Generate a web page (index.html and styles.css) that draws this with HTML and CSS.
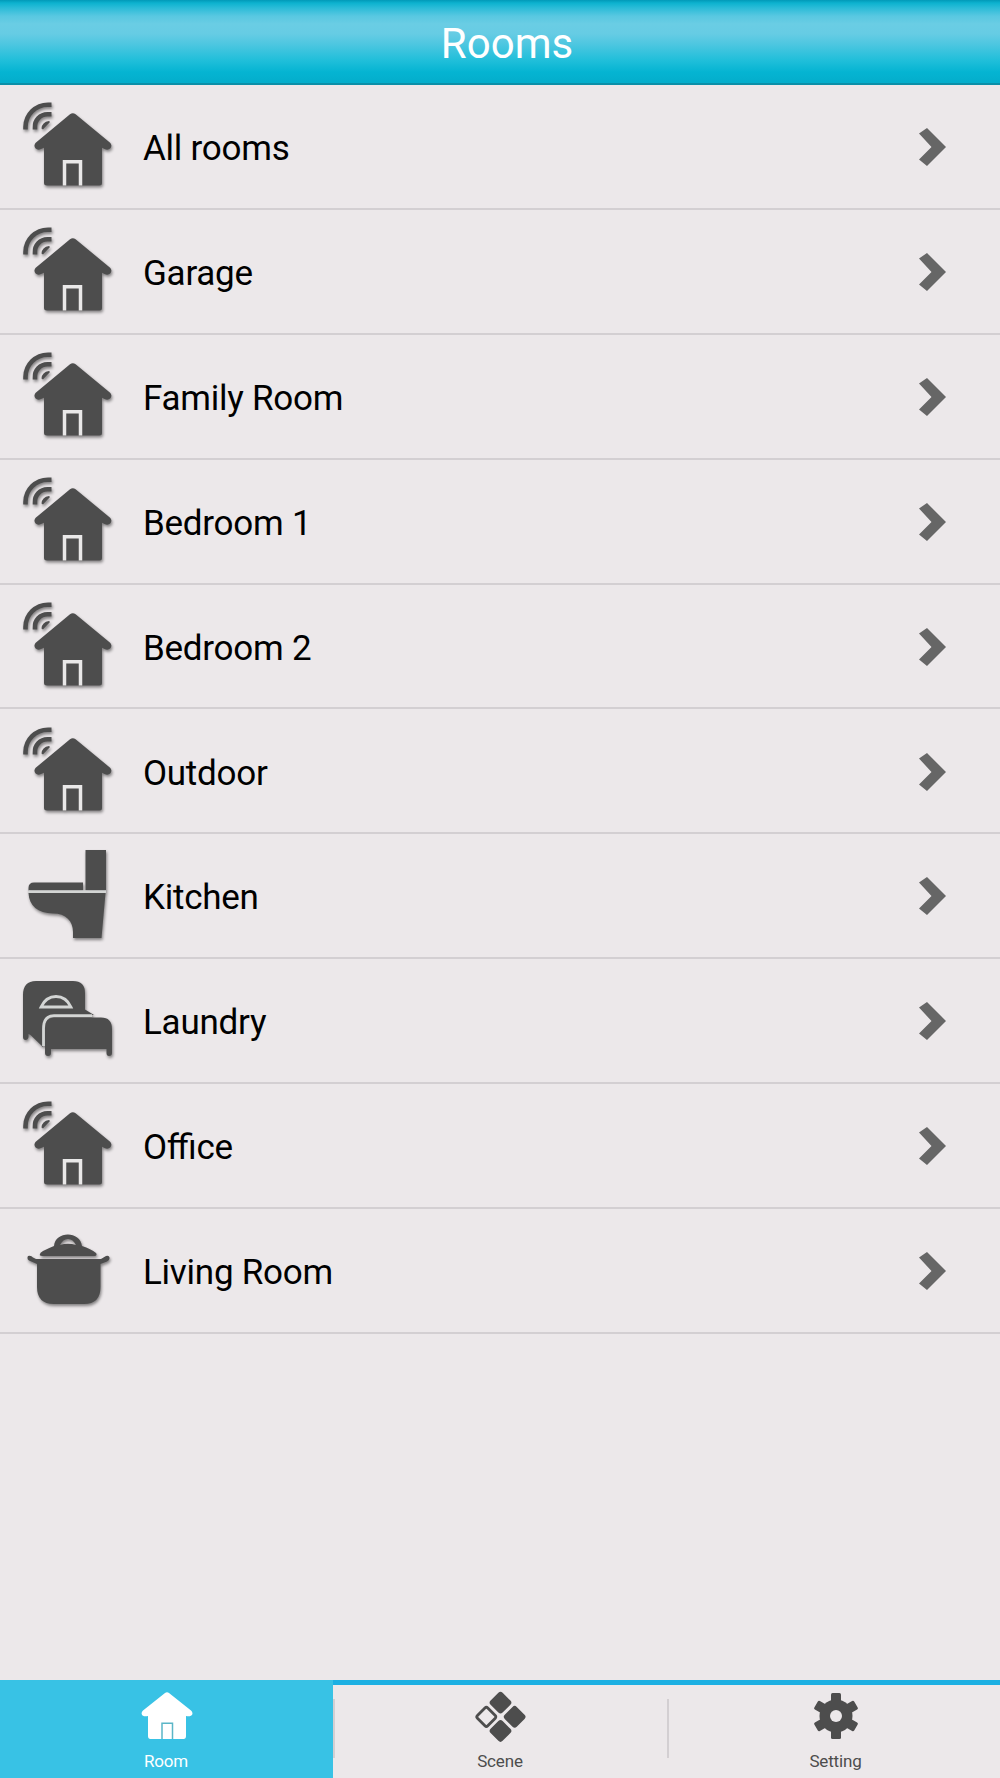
FILE: index.html
```
<!DOCTYPE html>
<html lang="en">
<head>
<meta charset="utf-8">
<title>Rooms</title>
<link rel="stylesheet" href="styles.css">
</head>
<body>
<svg class="sprite" aria-hidden="true">
  <symbol id="home" viewBox="16 0 104 124">
    <path d="M25.500 44.500V42A22.500 22.500 0 0 1 48 19.700H51.500M35 44.500V42.500A12.500 12.500 0 0 1 47.500 29.200H51.500" fill="none" stroke="currentColor" stroke-width="4.600"/>
    <path d="M41.500 43.500Q42 37 49 36L50 37L43 44.500Z"/>
    <path d="M70 29.300Q72.800 27 75.600 29.300L109.800 57.500C113.800 61.500 109.500 66.500 104.500 64L102 62.800V98Q102 100.500 99.500 100.500H47Q44 100.500 44 98V62.800L41 64C36.500 66.500 32 61.500 36 57.500Z"/>
    <path class="cut" d="M64.500 100.500V76.800H80.500V100.500"/>
  </symbol>
  <symbol id="toilet" viewBox="16 0 104 124">
    <path d="M85.500 16H106V56.500H85.500Z"/>
    <path d="M28.500 56.500V54Q28.500 48.500 34 48.500H83V56.500Z"/>
    <path class="line" d="M28.500 57.700H106"/>
    <path d="M28.500 59H105.500L101.500 104H73V98C73 87 66 79.500 53 79.500C38 79 29 72 28.500 59Z"/>
  </symbol>
  <symbol id="bed" viewBox="16 0 104 124">
    <path d="M23 36Q23 22 36 22H73Q85 22 85 34V50.500L94 56H54Q44 57 43 66V88L30.500 76L28.500 75V78Q28 81 25.500 81Q23 81 23 78Z"/>
    <path class="line" d="M41 48Q46 37.500 56 37.500Q66 37.500 71 48Z"/>
    <path class="line" d="M43.500 87V70Q43.500 56.700 54 56.700H92"/>
    <path d="M45 69Q45 58.500 54 58.500H101Q112 58.500 112 70V94Q112 97 109 97Q106.500 97 106.500 94V90H51V94Q51 97 48 97Q45 97 45 94Z"/>
  </symbol>
  <symbol id="pot" viewBox="16 0 104 124">
    <path fill-rule="evenodd" d="M40 46.500Q39 44 43 42Q49 39 54 37C55 21.500 80.500 21.500 82 37Q91 40 96 44Q97.500 46.500 95 47H42ZM60 36Q68 33.500 76 36Q73 30 68 30Q63 30 60 36Z"/>
    <path d="M28 47Q31 46 33 48.500L36 50H101L106 47Q109 46 109.500 48.500Q110 51 107 52.500L100.500 55V78Q100.500 95 84 95H54Q37 95 37 78V55L29 51.500Q26.500 50 28 47Z"/>
  </symbol>
  <symbol id="chevron" viewBox="0 0 28 40">
    <path d="M0 6.500L8 1L27 20L8 39L0 32.500L12.500 20Z"/>
  </symbol>
</svg>

<div class="app">
  <header class="header"><h1 class="title">Rooms</h1></header>

  <main class="list">
    <div class="row"><svg class="row-icon"><use href="#home"/></svg><span class="name">All rooms</span><svg class="chevron"><use href="#chevron"/></svg></div>
    <div class="row"><svg class="row-icon"><use href="#home"/></svg><span class="name">Garage</span><svg class="chevron"><use href="#chevron"/></svg></div>
    <div class="row"><svg class="row-icon"><use href="#home"/></svg><span class="name">Family Room</span><svg class="chevron"><use href="#chevron"/></svg></div>
    <div class="row"><svg class="row-icon"><use href="#home"/></svg><span class="name">Bedroom 1</span><svg class="chevron"><use href="#chevron"/></svg></div>
    <div class="row"><svg class="row-icon"><use href="#home"/></svg><span class="name">Bedroom 2</span><svg class="chevron"><use href="#chevron"/></svg></div>
    <div class="row"><svg class="row-icon"><use href="#home"/></svg><span class="name">Outdoor</span><svg class="chevron"><use href="#chevron"/></svg></div>
    <div class="row"><svg class="row-icon"><use href="#toilet"/></svg><span class="name">Kitchen</span><svg class="chevron"><use href="#chevron"/></svg></div>
    <div class="row"><svg class="row-icon"><use href="#bed"/></svg><span class="name">Laundry</span><svg class="chevron"><use href="#chevron"/></svg></div>
    <div class="row"><svg class="row-icon"><use href="#home"/></svg><span class="name">Office</span><svg class="chevron"><use href="#chevron"/></svg></div>
    <div class="row"><svg class="row-icon"><use href="#pot"/></svg><span class="name">Living Room</span><svg class="chevron"><use href="#chevron"/></svg></div>
  </main>

  <nav class="tabs">
    <div class="tab active">
      <svg class="tab-icon" viewBox="0 0 56 56">
        <path d="M26 5Q28 3.300 30 5L52 22.500C55.500 26 52.500 29.500 47 28V48Q47 51 44.500 51H11.500Q9 51 9 48V28C3 29.500 1 25.500 4 22.500Z"/>
        <path class="door" d="M23 51V35.300H33.500V51"/>
      </svg>
      <span class="tab-label">Room</span>
    </div>
    <div class="tab">
      <svg class="tab-icon" viewBox="0 0 56 56">
        <g transform="translate(28.500 28.800) rotate(45)">
          <rect x="-18.500" y="-18.500" width="17" height="17" rx="3"/>
          <rect x="1.500" y="-18.500" width="17" height="17" rx="3"/>
          <rect x="1.500" y="1.500" width="17" height="17" rx="3"/>
          <rect class="hollow" x="-17.300" y="2.700" width="14.600" height="14.600" rx="2"/>
        </g>
      </svg>
      <span class="tab-label">Scene</span>
    </div>
    <div class="tab">
      <svg class="tab-icon" viewBox="0 0 56 56">
        <defs><rect id="tooth" x="-5" y="-23" width="10" height="46" rx="1.500"/></defs>
        <g transform="translate(28 28)">
          <use href="#tooth"/>
          <use href="#tooth" transform="rotate(60)"/>
          <use href="#tooth" transform="rotate(120)"/>
          <circle r="16.500"/>
          <circle class="hub" r="6"/>
        </g>
      </svg>
      <span class="tab-label">Setting</span>
    </div>
  </nav>
</div>
</body>
</html>
```
FILE: styles.css
```
* {
  box-sizing: border-box;
}

body {
  margin: 0;
  background: #ece8ea;
  font-family: Roboto, "Liberation Sans", sans-serif;
}

.sprite {
  display: none;
}

.app {
  display: flex;
  flex-direction: column;
  height: 1778px;
}

.header {
  flex: none;
  height: 85px;
  padding: 0 0 0 14px;
  text-align: center;
  border-bottom: 2px solid #0b8fa8;
  background: linear-gradient(#0299b8 0, #0cb2cf 3px, #2bbcd8 8px, #58c8e1 16px, #6acde4 24px, #66cce4 34px, #4bc6e0 45px, #21bfda 60px, #05b4d2 72px, #04adcb 83px);
}

.title {
  margin: 0;
  color: #fff;
  font-size: 42px;
  font-weight: 400;
  line-height: 88px;
}

.list {
  flex: 1;
}

.row {
  display: flex;
  align-items: center;
  height: 124.88px;
  padding: 1.5px 53px 0 16px;
  border-bottom: 2px solid #d3cfd2;
}

.row-icon {
  width: 104px;
  height: 124px;
  flex: none;
  color: #4d4d4d;
  fill: currentColor;
  filter: drop-shadow(1px 2px 1.5px rgba(0, 0, 0, 0.45));
}

.cut,
.line {
  fill: none;
  stroke: #e9e8e8;
  stroke-width: 3.5;
}

.line {
  stroke: #d3d5d4;
  stroke-width: 2.8;
}

.name {
  flex: 1;
  margin-left: 23px;
  padding-top: 4px;
  color: #000;
  font-size: 35px;
  font-feature-settings: "liga" 1;
  letter-spacing: -0.25px;
  line-height: 40px;
}

.chevron {
  width: 28px;
  height: 40px;
  fill: #666;
}

.tabs {
  flex: none;
  display: grid;
  grid-template-columns: 333px 334px 333px;
  height: 98px;
}

.tab {
  position: relative;
  display: flex;
  flex-direction: column;
  align-items: center;
  padding-top: 3px;
  border-top: 5px solid #1cb0e3;
  color: #4d4d4d;
  fill: currentColor;
}

.tab.active {
  border-top-color: #38c2e5;
  background: #38c2e5;
  color: #fff;
}

.tab.active .tab-label {
  padding-right: 1px;
}

.tab:last-child {
  padding-left: 4px;
}

.tab + .tab::before {
  content: "";
  position: absolute;
  left: 0;
  top: 14px;
  width: 2px;
  height: 59px;
  background: #d3cfd2;
}

.tab-icon {
  width: 56px;
  height: 56px;
}

.door {
  fill: none;
  stroke: #5bb6c7;
  stroke-width: 1.5;
}

.hollow {
  fill: none;
  stroke: #4d4d4d;
  stroke-width: 2.8;
}

.hub {
  fill: #ece8ea;
}

.tab-label {
  margin-top: 7px;
  font-size: 17px;
  letter-spacing: -0.15px;
  line-height: 20px;
}
```
